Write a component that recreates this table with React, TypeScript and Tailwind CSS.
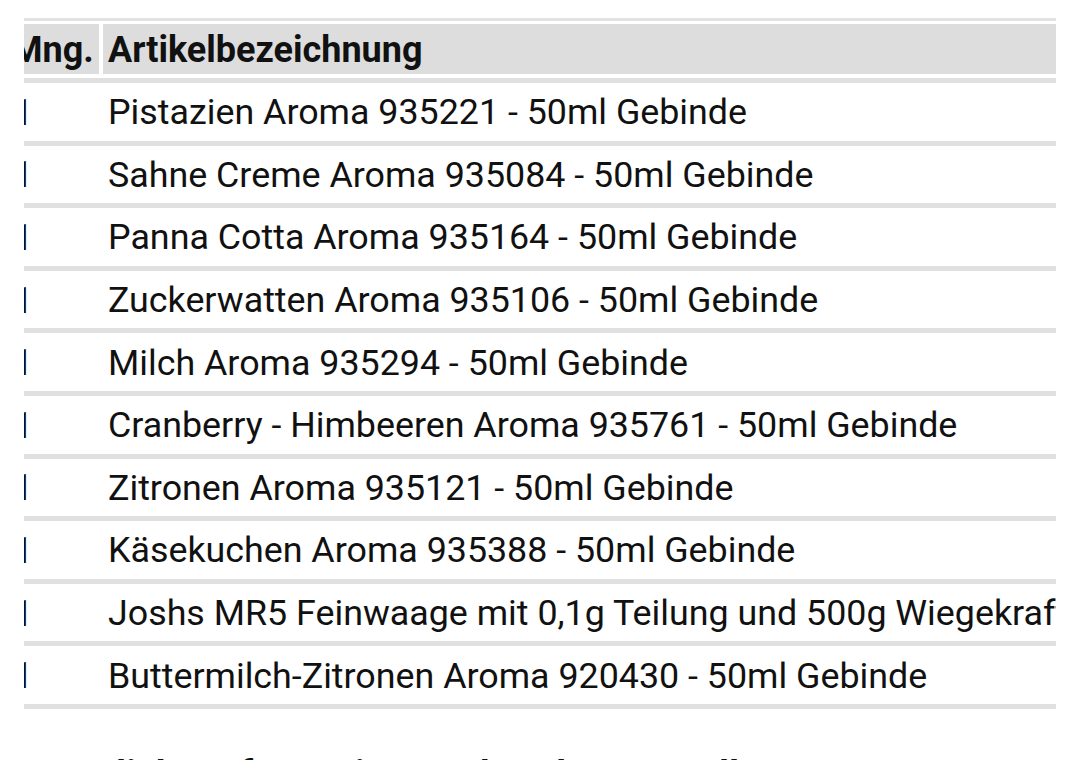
import React from "react";

const rows = [
  "Pistazien Aroma 935221 - 50ml Gebinde",
  "Sahne Creme Aroma 935084 - 50ml Gebinde",
  "Panna Cotta Aroma 935164 - 50ml Gebinde",
  "Zuckerwatten Aroma 935106 - 50ml Gebinde",
  "Milch Aroma 935294 - 50ml Gebinde",
  "Cranberry - Himbeeren Aroma 935761 - 50ml Gebinde",
  "Zitronen Aroma 935121 - 50ml Gebinde",
  "Käsekuchen Aroma 935388 - 50ml Gebinde",
  "Joshs MR5 Feinwaage mit 0,1g Teilung und 500g Wiegekraft",
  "Buttermilch-Zitronen Aroma 920430 - 50ml Gebinde",
];

export default function App() {
  return (
    <div
      className="w-[1080px] h-[760px] overflow-hidden bg-white text-[#111]"
      style={{ fontFamily: "Roboto, 'Noto Sans', sans-serif" }}
    >
      <div className="ml-[24px] w-[1032px] overflow-hidden pt-[18px]">
        <div className="h-[3px] bg-[#e2e2e2]" />
        <div className="mt-[3px] flex h-[50px]">
          <div className="w-[75px] shrink-0 overflow-hidden bg-[#dddddd] flex items-center pt-[1px]">
            <span className="ml-[-13px] text-[36px] font-bold leading-none whitespace-nowrap">Mng.</span>
          </div>
          <div className="ml-[4px] flex-1 bg-[#dddddd] flex items-center pl-[5px] pt-[1px]">
            <span className="text-[36px] font-bold leading-none whitespace-nowrap">Artikelbezeichnung</span>
          </div>
        </div>
        <div className="mt-[4px] h-[5px] bg-[#e0e0e0]" />
        {rows.map((r) => (
          <div key={r} className="flex h-[62.6px] border-b-[5px] border-[#e0e0e0] items-center pt-[3px]">
            <div className="w-[75px] shrink-0 overflow-hidden">
              <span className="ml-[-11px] text-[36px] leading-none">1</span>
            </div>
            <div className="ml-[4px] flex-1 pl-[5px] overflow-hidden">
              <span className="text-[35.8px] leading-none whitespace-nowrap">{r}</span>
            </div>
          </div>
        ))}
      </div>
      <div className="mt-[47px] ml-[0px] whitespace-nowrap text-[38px] font-bold leading-none">
        Zusätzliche Informationen über Ihre Bestellung
      </div>
    </div>
  );
}
